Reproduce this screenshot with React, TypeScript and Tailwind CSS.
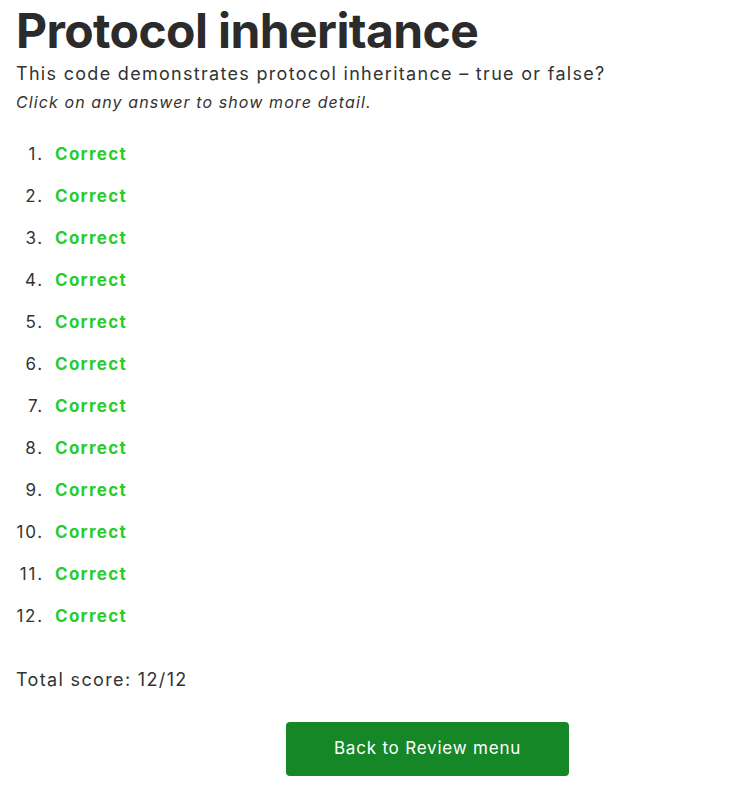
import React from "react";

export default function App() {
  const items = Array.from({ length: 12 }, (_, i) => i + 1);
  return (
    <div className="min-h-[788px] bg-white px-4 pt-[2px] text-[#333333]" style={{ fontFamily: "Inter, 'Noto Sans', sans-serif" }}>
      <h1 className="text-[48px] font-bold leading-[58px] tracking-[-0.6px] text-[#2b2b2b]">Protocol inheritance</h1>
      <p className="mt-[2px] text-[18px] leading-[24px] tracking-[1.3px]">This code demonstrates protocol inheritance – true or false?</p>
      <p className="mt-[6px] text-[16px] italic leading-[20px] tracking-[1.1px]">Click on any answer to show more detail.</p>
      <div className="mt-[22px] flex flex-col">
        {items.map((n) => (
          <div key={n} className="flex h-[42px] items-center">
            <span className="w-[28px] text-right text-[17px] tracking-[1.8px]">{n}.</span>
            <span className="ml-[11px] text-[17px] font-bold tracking-[1.3px] text-[#29cc2f]">Correct</span>
          </div>
        ))}
      </div>
      <p className="mt-[28px] text-[18px] tracking-[1.35px]">Total score: 12/12</p>
      <div className="mt-[29px] flex">
        <button className="ml-[270px] h-[54px] w-[283px] rounded-[4px] bg-[#158726] text-[17px] tracking-[0.8px] text-white">Back to Review menu</button>
      </div>
    </div>
  );
}
